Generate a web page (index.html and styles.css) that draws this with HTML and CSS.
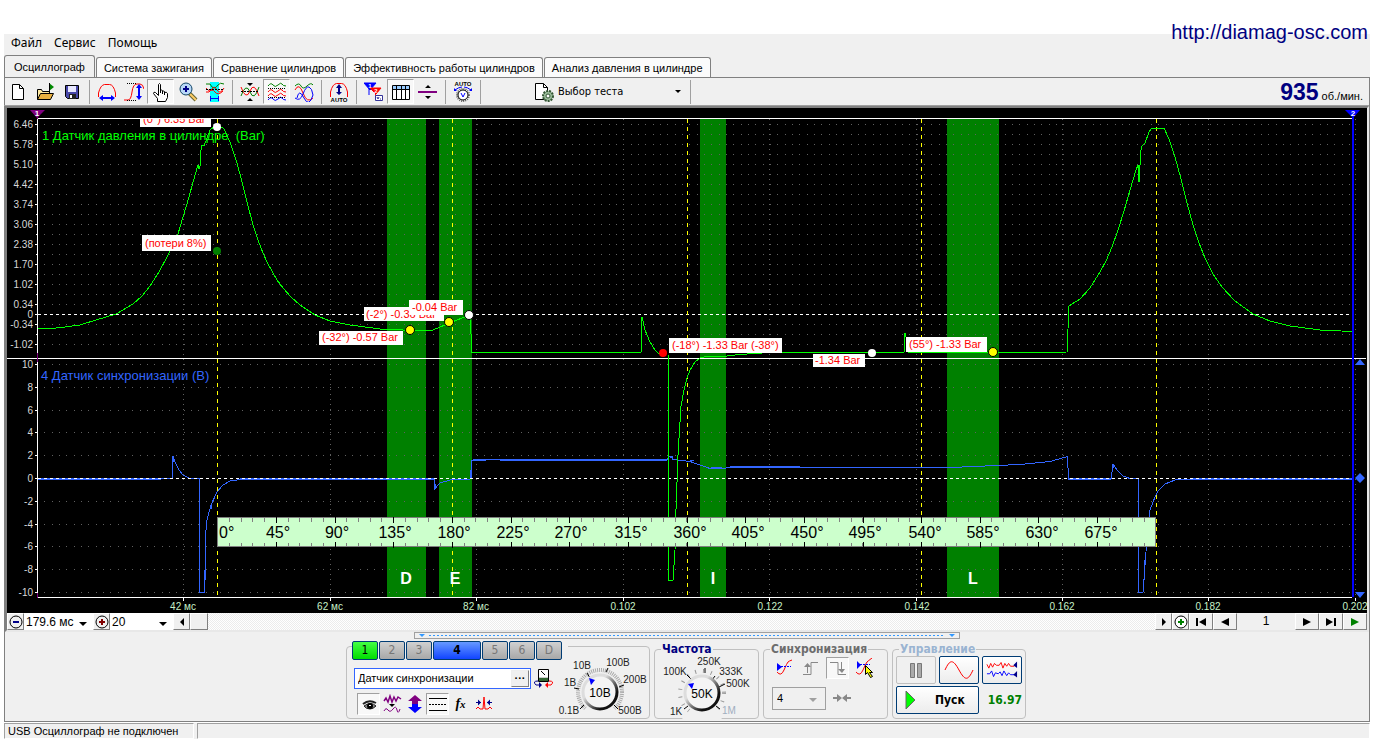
FILE: index.html
```html
<!DOCTYPE html>
<html lang="ru">
<head>
<meta charset="utf-8">
<title>Осциллограф</title>
<link rel="stylesheet" href="styles.css">
</head>
<body>
<header class="site"><a class="site-link" href="#">http://diamag-osc.com</a></header>
<div class="window">
  <nav class="menu">
    <button class="menu-item">Файл</button>
    <button class="menu-item">Сервис</button>
    <button class="menu-item">Помощь</button>
  </nav>
  <div class="tabs" role="tablist">
    <button class="tab active" role="tab" aria-selected="true">Осциллограф</button>
    <button class="tab" role="tab">Система зажигания</button>
    <button class="tab" role="tab">Сравнение цилиндров</button>
    <button class="tab" role="tab">Эффективность работы цилиндров</button>
    <button class="tab" role="tab">Анализ давления в цилиндре</button>
  </div>
  <main class="workspace">
    <div class="toolbar">
      <button class="tool" aria-label="Новый"><svg viewBox="0 0 20 20"><path d="M4.500 2.500h7l4 4v11h-11z" fill="#fff" stroke="#000"/><path d="M11.500 2.500v4h4" fill="none" stroke="#000"/></svg></button>
      <button class="tool" aria-label="Открыть"><svg viewBox="0 0 20 20"><path d="M2.500 17.500v-10h4l1 2h7v3" fill="#ffe9a0" stroke="#000"/><path d="M2.500 17.500l3-6h13l-3 6z" fill="#e8b040" stroke="#000"/><path d="M14 1v8l5-4z" fill="#080"/><path d="M14.500 1v10" stroke="#000"/></svg></button>
      <button class="tool" aria-label="Сохранить"><svg viewBox="0 0 20 20"><path d="M3.500 3.500h13v13h-11l-2-2z" fill="#4848a8" stroke="#000"/><path d="M6 4h8v6H6z" fill="#e8e8ff"/><path d="M7 12h7v5H7z" fill="#222"/><path d="M8 13h2v3H8z" fill="#fff"/></svg></button>
      <span class="sep"></span>
      <button class="tool" aria-label="Развертка"><svg viewBox="0 0 20 20"><path d="M1.500 15v-4q2-8 6-8.500h5q4 0 6 8.500v4" fill="none" stroke="red"/><path d="M5 16h10" stroke="#00f" stroke-width="2"/><path d="M2 16l4-3v6zM18 16l-4-3v6z" fill="#00f"/></svg></button>
      <button class="tool" aria-label="Амплитуда"><svg viewBox="0 0 20 20"><path d="M0 18h4q3 0 4-8t5-8h3q3 0 4 5" fill="none" stroke="red"/><path d="M3 1.500h10M3 18.500h10" stroke="#000" stroke-dasharray="1 1"/><path d="M15 5v10" stroke="#00f" stroke-width="2"/><path d="M15 2l3 4h-6zM15 18l3-4h-6z" fill="#00f"/></svg></button>
      <button class="tool pressed" aria-label="Рука"><svg viewBox="0 0 20 20"><path d="M6.500 19.500v-3l-4-5q0-2 2-1l3 3V2.500q1-2 2 0v6q1.500-1 2 0v1q1.500-1 2 0v1q2-1 3 1v4l-2 4z" fill="#fff" stroke="#000"/><path d="M9.500 8v3M11.500 9v3M13.500 10v3" stroke="#000"/></svg></button>
      <button class="tool" aria-label="Лупа"><svg viewBox="0 0 20 20"><path d="M11 11l7 7" stroke="#663" stroke-width="4"/><path d="M12 12l6 6" stroke="#fc6" stroke-width="2"/><circle cx="8" cy="7" r="6" fill="#b8d8f8" stroke="#146"/><path d="M8 4v6M5 7h6" stroke="#008" stroke-width="2"/></svg></button>
      <button class="tool" aria-label="Фрагмент"><svg viewBox="0 0 20 20"><path d="M5 0h9v20H5z" fill="cyan"/><path d="M1 2h4q2 4 4 4t4-3 6-1" fill="none" stroke="green"/><path d="M1 6q4 5 6 1t5 1 7-2M1 10h3q3-4 6 0t8-1" fill="none" stroke="red"/><path d="M1 7.500h18" stroke="#000" stroke-dasharray="2 1"/><path d="M5.500 14v5M13.500 14v5M6 16.500h7" stroke="#00f"/></svg></button>
      <span class="sep"></span>
      <button class="tool" aria-label="Совместить"><svg viewBox="0 0 20 20"><path d="M1 14q5-14 9-4t9-5" fill="none" stroke="green"/><path d="M1 5q5 14 9 4t9 5" fill="none" stroke="red"/><path d="M1 9.500h18" stroke="#000" stroke-dasharray="2 1"/><path d="M7 1h6l-3 3zM7 19h6l-3-3z"/></svg></button>
      <button class="tool pressed" aria-label="Раздельно"><svg viewBox="0 0 20 20" fill="none"><path d="M1 4q3-4 5-1t5 0 4-1 4 2" stroke="green"/><path d="M1 10q3-4 5-1t5 0 4-1 4 2M1 14q3-4 5-1t5 0 4-1 4 2" stroke="red"/><path d="M1 18q3-4 5-1t5 0 4-1 4 2" stroke="#00f"/><path d="M1 6.500h18M1 15.500h18" stroke="#000" stroke-dasharray="1 1"/></svg></button>
      <button class="tool" aria-label="Наложить"><svg viewBox="0 0 20 20" fill="none"><path d="M1 4q4-4 6 0t6 0 6-1" stroke="green"/><path d="M1 8q4-8 8 3t10 5" stroke="red"/><path d="M1 16q5 4 8-4t6-7q3 1 4 8" stroke="#00f"/><path d="M3 16q2-10 7 0t9-3" stroke="#00f"/></svg></button>
      <span class="sep"></span>
      <button class="tool" aria-label="Авто"><svg viewBox="0 0 20 20"><path d="M1.500 15v-5q2-8 6-8.500h5q4 0 6 8.500v5" fill="none" stroke="red"/><path d="M10 5v6" stroke="#008" stroke-width="2"/><path d="M10 2l3 4H7zM10 13l3-3H7z" fill="#008"/><text x="10" y="20" class="micro">AUTO</text></svg></button>
      <span class="sep"></span>
      <button class="tool" aria-label="Маркеры"><svg viewBox="0 0 20 20"><path d="M0 1h12L6 8zM5 5v8" fill="#00f" stroke="#00f"/><path d="M6 6h11l-5 6zM11.500 10v5" fill="red" stroke="red"/><text x="6" y="6" class="micro light">1</text><text x="12" y="11" class="micro light">2</text><path d="M11.500 13.500h7v5h-7z" fill="#fff" stroke="#339"/><path d="M13 15l1 2 1-2M16 17h1" fill="none" stroke="#339"/></svg></button>
      <button class="tool pressed" aria-label="Таблица"><svg viewBox="0 0 20 20"><path d="M1.500 3.500h17v14h-17z" fill="#fff" stroke="#000"/><path d="M2 4h16v3H2z" fill="#9cf"/><path d="M1 7.500h18M5.500 4v14M10.500 4v14M14.500 4v14" stroke="#000"/></svg></button>
      <button class="tool" aria-label="Разделитель"><svg viewBox="0 0 20 20"><path d="M0 10h19" stroke="purple" stroke-width="2"/><path d="M7 6h6l-3-3zM7 14h6l-3 3z"/></svg></button>
      <span class="sep"></span>
      <button class="tool" aria-label="Автомасштаб"><svg viewBox="0 0 20 20"><text x="10" y="4" class="micro">AUTO</text><circle cx="10" cy="13" r="6" fill="#fff" stroke="#666" stroke-width="2" stroke-dasharray="1 1"/><circle cx="10" cy="13" r="5" fill="#fff" stroke="#000"/><path d="M8 11l2 4 2-4" fill="none" stroke="#00f"/><path d="M2 8q4-3 7-3M18 8q-4-3-7-3" fill="none" stroke="#00f"/><path d="M1 6v3h3zM19 6v3h-3z" fill="#00f"/></svg></button>
      <span class="sep"></span>
      <button class="test-pick"><svg viewBox="0 0 22 20"><path d="M2.500 1.500h8l4 4v12h-12z" fill="#fff" stroke="#000"/><path d="M10.500 1.500v4h4" fill="none" stroke="#000"/><circle cx="15" cy="14" r="5" fill="#9b9" stroke="#353" stroke-width="2" stroke-dasharray="2 1"/><circle cx="15" cy="14" r="2" fill="#fff" stroke="#353"/></svg><span>Выбор теста</span><i class="down"></i></button>
      <span class="sep"></span>
      <output class="rpm"><b>935</b> об./мин.</output>
    </div>
    <section class="scope">
      <svg class="chart" viewBox="7 108 1360 505" role="img" aria-label="Осциллограмма">
        <path d="M7 108h1360v505H7z" fill="#000"/>
        <g fill="green"><path d="M387 119h39v478h-39zM439 119h33v478h-33zM700 119h26v478h-26zM947 119h52v478h-52z"/></g>
        <g class="dots">
          <path stroke-dasharray="1 6.330" d="M37 124.500H1352M37 134.500H1352M37 144.500H1352M37 154.500H1352M37 164.500H1352M37 174.500H1352M37 184.500H1352M37 194.500H1352M37 204.500H1352M37 214.500H1352M37 224.500H1352M37 234.500H1352M37 244.500H1352M37 254.500H1352M37 264.500H1352M37 274.500H1352M37 284.500H1352M37 294.500H1352M37 304.500H1352M37 324.500H1352M37 334.500H1352M37 344.500H1352M37 364.500H1352M37 387.500H1352M37 410.500H1352M37 432.500H1352M37 455.500H1352M37 501.500H1352M37 524.500H1352M37 546.500H1352M37 569.500H1352M37 592.500H1352"/>
          <path stroke-dasharray="1 4" d="M183.500 119V597M330.500 119V597M476.500 119V597M623.500 119V597M769.500 119V597M916.500 119V597M1062.500 119V597M1208.500 119V597M1355.500 119V597"/>
        </g>
        <g class="axis">
          <path d="M37 118.500H1352M7 358.500H1366M37 597.500H1352M37.500 119V353M37.500 362V597"/>
          <path d="M35 124.500h3M36 134.500h2M35 144.500h3M36 154.500h2M35 164.500h3M36 174.500h2M35 184.500h3M36 194.500h2M35 204.500h3M36 214.500h2M35 224.500h3M36 234.500h2M35 244.500h3M36 254.500h2M35 264.500h3M36 274.500h2M35 284.500h3M36 294.500h2M35 304.500h3M35 314.500h3M35 324.500h3M36 334.500h2M35 344.500h3M35 364.500h3M35 387.500h3M35 410.500h3M35 432.500h3M35 455.500h3M35 478.500h3M35 501.500h3M35 524.500h3M35 546.500h3M35 569.500h3M35 592.500h3"/>
          <path d="M183.500 598v3M330.500 598v3M476.500 598v3M623.500 598v3M769.500 598v3M916.500 598v3M1062.500 598v3M1208.500 598v3M1355.500 598v3"/>
        </g>
        <path class="zero" d="M38 314.500H1350"/>
        <g class="cursor"><path d="M217.500 119V597M452.500 119V597M687.500 119V597M921.500 119V597M1156.500 119V597"/></g>
        <g class="scale">
          <text x="33" y="128">6.46</text><text x="33" y="148">5.78</text><text x="33" y="168">5.10</text><text x="33" y="188">4.42</text><text x="33" y="208">3.74</text><text x="33" y="228">3.06</text><text x="33" y="248">2.38</text><text x="33" y="268">1.70</text><text x="33" y="288">1.02</text><text x="33" y="308">0.34</text><text x="33" y="318">0</text><text x="33" y="328">-0.34</text><text x="33" y="348">-1.02</text>
          <text x="33" y="368">10</text><text x="33" y="391">8</text><text x="33" y="414">6</text><text x="33" y="436">4</text><text x="33" y="459">2</text><text x="33" y="482">0</text><text x="33" y="505">-2</text><text x="33" y="528">-4</text><text x="33" y="550">-6</text><text x="33" y="573">-8</text><text x="33" y="596">-10</text>
        </g>
        <g class="time">
          <text x="183" y="610">42 мс</text><text x="330" y="610">62 мс</text><text x="476" y="610">82 мс</text><text x="623" y="610">0.102</text><text x="770" y="610">0.122</text><text x="917" y="610">0.142</text><text x="1062" y="610">0.162</text><text x="1208" y="610">0.182</text><text x="1355" y="610">0.202</text>
        </g>
        <text class="name" x="42" y="140" fill="lime">1 Датчик давления в цилиндре&#160; (Bar)</text>
        <text class="name" x="41" y="380" fill="#36f">4 Датчик синхронизации (В)</text>
        <path class="trace" stroke="#36f" d="M38 479.500H150L172 478.500 173 456.500 175 462 179 470 183 475 190 478.500H199.500V592.500H204.500L205 570 206 530 207 520 211 505 217 492 223 485 230 481 240 479.500H434.500V489L440 483 450 480 470 479.500 472 460.500 500 459.500H667L669 456.500H672L673 459.500 690 461.500 700 465 710 468.500H722L730 467.500H950L1020 464.500 1050 461.500 1067.500 456.500 1068.500 479.500H1111L1113 464 1117 470 1123 476 1130 478.500H1138.500V592.500H1143L1145 565 1148 525 1150 510 1155 497 1158 491 1165 484 1175 480 1190 479.500H1352"/>
        <path class="trace" stroke="#36f" d="M39 478.500H172M240 478.500H434M1069 478.500H1111M1190 478.500H1352M173.500 457V462M205.500 530V580M211.500 504V509M435.500 484V488M471.500 460V478M473 459.500H500M500 460.500H667M670 457.500H673M690 460.500H694M711 467.500H722M730 466.500H800M1113.500 464V468M1144.500 560V580"/>
        <path class="zero" d="M38 478.500H1350"/>
        <path class="trace" stroke="lime" d="M38 328.500H52L65 327 80 325 96 320 116 314 133 304 142 296 150 286 159 272 167 257 173 245 178 234 183 217 187 204 192 186 195 175 198 165 199 169 200 166 201 150 202 145 204 146 207 138 210 130 214 127H222L224 129 230 142 237 163 242 182 247 202 253 225 258 240 263 253 267 262 272 271 277 280 283 288 291 297 300 305 315 315 330 321 350 325 380 329 403 330 420 331 433 330 445 325 457 320 470 315 472 352.500H641L642 317 645 330 650 342 655 350 658 353H661M668.500 355V580.500H673L675 550 676 510 678 455 681 406 684 390 687 378 690 370 695 362 700 358 708 356 720 357 735 355 747 354 770 352.500H904L905 333 907 341 909 352.500H1035L1067 352 1069 306 1072 304 1080 299 1090 288 1100 272 1106 261 1112 247 1118 230 1124 211 1130 190 1136 170 1138 165 1139 182 1140 165 1141 150 1142 146 1145 143 1149 132 1152 128H1164L1169 139 1175 157 1181 179 1187 203 1193 225 1199 243 1205 258 1213 274 1222 287 1235 301 1253 314 1270 321 1290 326 1320 330 1352 331.500"/>
        <g fill="#fff"><path d="M142 235h69v16h-69zM140 119h71v8h-71zM319 331h84v14h-84zM364 307h80v14h-80z"/></g>
        <clipPath id="plot"><path d="M38 119h1314v478H38z"/></clipPath>
        <g class="note">
          <text x="143" y="123" clip-path="url(#plot)">(0°) 6.35 Bar</text>
          <text x="145" y="247">(потери 8%)</text>
          <text x="322" y="341">(-32°) -0.57 Bar</text>
          <text x="366" y="318">(-2°) -0.36 Bar</text>
          <path d="M409 300h54v15h-54z" fill="#fff"/><text x="412" y="311">-0.04 Bar</text>
          <path d="M669 338h113v15H669z" fill="#fff"/><text x="672" y="349">(-18°) -1.33 Bar (-38°)</text>
          <path d="M813 354h52v13h-52z" fill="#fff"/><text x="815" y="364">-1.34 Bar</text>
          <path d="M906 337h81v15h-81z" fill="#fff"/><text x="909" y="348">(55°) -1.33 Bar</text>
        </g>
        <circle cx="217" cy="127" r="4" fill="#fff"/><circle cx="217" cy="251" r="4" fill="green"/>
        <g stroke="#000"><circle cx="410" cy="330" r="4.500" fill="#ff0"/><circle cx="449" cy="322" r="4.500" fill="#ff0"/><circle cx="469" cy="315" r="4.500" fill="#fff"/><circle cx="993" cy="352" r="4.500" fill="#ff0"/></g>
        <circle cx="663" cy="353" r="4" fill="red"/><circle cx="872" cy="353" r="4" fill="#fff"/>
        <g class="ruler">
          <path d="M217.500 517.500h938v29h-938z" fill="#cfc" stroke="#808080"/>
          <path d="M229 520H1155M229 545H1155" stroke="#808080" stroke-width="4" stroke-dasharray="1 10.730"/>
          <path d="M276 520H1155M276 545H1155" stroke="#000" stroke-width="6" stroke-dasharray="1 57.650"/>
          <text x="219" y="538" class="zero-mark">0°</text><text x="278" y="538">45°</text><text x="337" y="538">90°</text><text x="395" y="538">135°</text><text x="454" y="538">180°</text><text x="513" y="538">225°</text><text x="571" y="538">270°</text><text x="631" y="538">315°</text><text x="690" y="538">360°</text><text x="748" y="538">405°</text><text x="807" y="538">450°</text><text x="865" y="538">495°</text><text x="925" y="538">540°</text><text x="983" y="538">585°</text><text x="1042" y="538">630°</text><text x="1101" y="538">675°</text>
        </g>
        <g class="zone"><text x="406" y="584">D</text><text x="455" y="584">E</text><text x="713" y="584">I</text><text x="973" y="584">L</text></g>
        <path d="M30 110h15l-8 8z" fill="purple"/><path d="M37.500 117v2M37.500 353v9M37.500 593v5" stroke="purple"/>
        <path d="M1345 110h15l-7 8z" fill="#00f"/><path d="M1353 115V597" stroke="#00f" stroke-width="2"/>
        <text class="tag" x="37" y="116">1</text><text class="tag" x="1353" y="116">2</text>
        <g fill="#36f"><path d="M1355 365h10l-5-6zM1355 592h10l-5 6zM1360 473l5 5-5 5-5-5z"/></g>
      </svg>
      <div class="navbar">
        <button class="nav small" aria-label="Уменьшить"><svg viewBox="0 0 14 14"><circle cx="7" cy="7" r="6" fill="#f0f0f0" stroke="#000"/><path d="M4 7h6" stroke="#008" stroke-width="2"/></svg></button>
        <span class="pick span"><select aria-label="Развертка"><option>179.6 мс</option></select></span>
        <button class="nav small" aria-label="Увеличить"><svg viewBox="0 0 14 14"><circle cx="7" cy="7" r="6" fill="#f0f0f0" stroke="#000"/><path d="M4 7h6M7 4v6" stroke="#800000" stroke-width="2"/></svg></button>
        <span class="pick step"><select aria-label="Шаг"><option>20</option></select></span>
        <button class="nav small" aria-label="Влево"><svg viewBox="0 0 14 14"><path d="M9 3v8L5 7z"/></svg></button>
        <span class="track"><span class="thumb"></span></span>
        <button class="nav small" aria-label="Вправо"><svg viewBox="0 0 14 14"><path d="M5 3v8l4-4z"/></svg></button>
        <button class="nav small" aria-label="Добавить"><svg viewBox="0 0 14 14"><circle cx="7" cy="7" r="6" fill="#fff" stroke="#000"/><path d="M4 7h6M7 4v6" stroke="green" stroke-width="2"/></svg></button>
        <button class="nav" aria-label="В начало"><svg viewBox="0 0 14 14"><path d="M3 3v8" stroke="#000" stroke-width="2"/><path d="M12 3v8L5 7z"/></svg></button>
        <button class="nav" aria-label="Назад"><svg viewBox="0 0 14 14"><path d="M11 3v8L3 7z"/></svg></button>
        <output class="page">1</output>
        <button class="nav" aria-label="Вперед"><svg viewBox="0 0 14 14"><path d="M3 3v8l8-4z"/></svg></button>
        <button class="nav" aria-label="В конец"><svg viewBox="0 0 14 14"><path d="M2 3v8l7-4z"/><path d="M11 3v8" stroke="#000" stroke-width="2"/></svg></button>
        <button class="nav" aria-label="Играть"><svg viewBox="0 0 14 14"><path d="M3 3v8l8-4z" fill="green"/></svg></button>
      </div>
    </section>
    <button class="splitter" aria-label="Свернуть панель"><i></i><span></span><i></i></button>
    <section class="controls">
      <div class="group channel">
        <div class="channels">
          <button class="ch one">1</button><button class="ch">2</button><button class="ch">3</button><button class="ch four">4</button><button class="ch">5</button><button class="ch">6</button><button class="ch">D</button>
        </div>
        <div class="channel-body">
          <div class="sensor-row">
            <span class="sensor"><input aria-label="Датчик" value="Датчик синхронизации"><button aria-label="Выбрать">···</button></span>
            <button class="mini" aria-label="Щуп"><svg viewBox="0 0 20 20"><path d="M4.500 1.500h10v12h-10z" fill="#ccc" stroke="#000"/><path d="M5 2h9v7H5z" fill="#fff"/><path d="M7 3l4 4" stroke="#000"/><path d="M5 11.500h9" stroke="#363" stroke-width="3"/><path d="M4 13q-6 0-2 4h3" fill="none" stroke="#008"/><path d="M15 13q6 0 2 4h-4" fill="none" stroke="red"/><path d="M8 17l-3-3v6z" fill="#008"/><path d="M11 17l3-3v6z" fill="red"/></svg></button>
          </div>
          <div class="mini-row">
            <button class="mini pressed" aria-label="Видимость"><svg viewBox="0 0 20 20"><path d="M5 12q7-5 12 0-3 3-6 3-4 0-6-3z" fill="#888" stroke="#222"/><circle cx="11" cy="12" r="3"/><path d="M4 10q6-5 13-1" fill="none" stroke="#222" stroke-width="2"/><path d="M10 11h2v1h-2z" fill="#fff"/></svg></button>
            <button class="mini" aria-label="Фильтр"><svg viewBox="0 0 20 20" fill="none"><path d="M2 7l2-3 2 4 2-6 2 6 2-5 2 4 2-4 3 2" stroke="purple" stroke-width="1.500"/><path d="M7 10h6l-3 3z" fill="#000"/><path d="M2 17q2-4 4-1t5-1 4 1 3-1" stroke="purple"/></svg></button>
            <button class="mini" aria-label="Смещение"><svg viewBox="0 0 20 20"><path d="M10 1l7 6h-4v3H7V7H3z" fill="purple"/><path d="M10 19l7-6h-4v-3H7v3H3z" fill="#00f"/></svg></button>
            <button class="mini pressed" aria-label="Уровни"><svg viewBox="0 0 20 20"><path d="M1 4.500h18M1 16.500h18" stroke="#000"/><path d="M1 10.500h18" stroke="#000" stroke-dasharray="2 1"/></svg></button>
            <button class="mini fx">f<sub>x</sub></button>
            <button class="mini" aria-label="Пик"><svg viewBox="0 0 20 20" fill="none"><path d="M2 15l2-2 2 2h3l1-12 1 12h3l2-2 2 2" stroke="red"/><path d="M2 8.500h5M13 8.500h5" stroke="#008"/><path d="M7 8.500l-3-3v6zM13 8.500l3-3v6z" fill="#008"/></svg></button>
          </div>
        </div>
        <svg class="dial" viewBox="555 654 94 62" role="img" aria-label="Масштаб 10В">
          <defs><linearGradient id="rim" x1="0" y1="0" x2="1" y2="1"><stop offset="0.350" stop-color="#ddd"/><stop offset="0.750" stop-color="#111"/></linearGradient></defs>
          <circle cx="600" cy="692" r="22" fill="none" stroke="#aaa" stroke-width="4" stroke-dasharray="1 1"/>
          <path d="M590 704l-14 14h48l-14-14z" fill="#f0f0f0"/>
          <path d="M587 673l3 5M608 668l-2 4M619 687l5-2M614 705l4 4M574 688l5 1M584 705l-4 4" stroke="#000"/>
          <circle cx="600" cy="692" r="17" fill="#f4f4f4" stroke="url(#rim)" stroke-width="3"/>
          <path d="M589 678l6 2-4 5z" fill="#00f"/>
          <g class="dial-text"><text x="600" y="697" class="value">10В</text><text x="582" y="669">10В</text><text x="618" y="666">100В</text><text x="635" y="683">200В</text><text x="570" y="686">1В</text><text x="569" y="714">0.1В</text><text x="630" y="714">500В</text></g>
        </svg>
      </div>
      <fieldset class="group rate"><legend>Частота</legend>
        <svg class="dial" viewBox="655 654 96 62" role="img" aria-label="Частота 50K">
          <circle cx="702" cy="692" r="22" fill="none" stroke="#999" stroke-width="4" stroke-dasharray="1 7"/>
          <path d="M692 706l-10 12h40l-10-12z" fill="#f0f0f0"/>
          <path d="M687 674l4 4M705 667v5M715 675l-3 4M719 686l6-3M688 705l-4 3M716 705l4 3" stroke="#000"/>
          <circle cx="702" cy="692" r="17" fill="#f4f4f4" stroke="url(#rim)" stroke-width="3"/>
          <path d="M688 683l6-1-2 6z" fill="#00f"/>
          <g class="dial-text"><text x="702" y="697" class="value">50K</text><text x="675" y="674">100K</text><text x="709" y="664">250K</text><text x="731" y="674">333K</text><text x="738" y="686">500K</text><text x="676" y="714">1K</text><text x="729" y="713" class="off">1M</text></g>
        </svg>
      </fieldset>
      <fieldset class="group sync"><legend>Синхронизация</legend>
        <div class="sync-row">
          <button class="mini" aria-label="Уровень"><svg viewBox="0 0 20 20"><path d="M3 14q4 5 7-2t4-8 4-2" fill="none" stroke="red"/><path d="M3 5v8l5-4z" fill="#00f"/><path d="M7 8.500h10" stroke="#00f" stroke-dasharray="2 1"/></svg></button>
          <button class="mini" aria-label="Фронт"><svg viewBox="0 0 20 20" fill="none"><path d="M2 16.500h8v-12h7" stroke="#888"/><path d="M6.500 15v-7" stroke="#888"/><path d="M3 9h7L6.500 5z" fill="#888"/></svg></button>
          <button class="mini pressed" aria-label="Спад"><svg viewBox="0 0 20 20" fill="none"><path d="M2 4.500h8v12h8" stroke="#888"/><path d="M13.500 4v9" stroke="#888"/><path d="M10 11h7l-3 4z" fill="#888"/></svg></button>
          <button class="mini" aria-label="Установить"><svg viewBox="0 0 20 20"><path d="M1 14q4 5 7-2t4-8 5-4" fill="none" stroke="red"/><path d="M2 3v8l4-4z" fill="#00f"/><path d="M5 6.500h10" stroke="#00f" stroke-dasharray="2 1"/><path d="M10.500 7.500v9l2-2 3 5 2-1-3-4h3z" fill="#ff0" stroke="#000"/></svg></button>
        </div>
        <div class="sync-row">
          <span class="pick source"><select disabled aria-label="Источник"><option>4</option></select></span>
          <button class="mini" aria-label="Центрировать"><svg viewBox="0 0 20 20"><path d="M1 10h6M13 10h6" stroke="#888" stroke-width="2"/><path d="M5 6v8l5-4zM15 6v8l-5-4z" fill="#888"/></svg></button>
        </div>
      </fieldset>
      <fieldset class="group run"><legend>Управление</legend>
        <button class="big off" aria-label="Пауза"><svg viewBox="0 0 30 22"><path d="M9.500 4.500h4v14h-4zM16.500 4.500h4v14h-4z" fill="#aaa" stroke="#777"/></svg></button>
        <button class="big" aria-label="Синус"><svg viewBox="0 0 30 22" fill="none"><path d="M1 11C6 0 9 0 15 11s9 11 14 0" stroke="red"/></svg></button>
        <button class="big" aria-label="Запись"><svg viewBox="-1 0 34 22" fill="none"><path d="M0 5l2 4 2-5 2 4 2-4 2 2h3l2-3 2 6 2-5 2 3 2-3 2 3h4" stroke="red"/><path d="M0 15h3l2-3 2 6 2-4 3 1 2-2 2 4 2-5 3 5 2-3 2 2h5" stroke="#00f"/><path d="M32 2v7l-4-3zM32 12v7l-4-3z" fill="#008"/></svg></button>
        <button class="big start"><svg viewBox="0 0 12 20"><path d="M1 1v18l9-9z" fill="#0f0" stroke="#666"/></svg>Пуск</button>
        <output class="volts">16.97</output>
      </fieldset>
    </section>
  </main>
  <footer class="status"><span class="state">USB Осциллограф не подключен</span><span class="rest"></span></footer>
</div>
</body>
</html>
```
FILE: styles.css
```css
* { box-sizing: border-box; }
body { margin: 0; padding: 0 12px 4px 4px; background: #fff; color: #000; font: 11px/14px "Liberation Sans", Arial, sans-serif; }
button, select, input { font: inherit; color: inherit; margin: 0; padding: 0; border-radius: 0; }
button { border: 0; background: none; }
svg { display: block; }
.site { height: 34px; padding-top: 20px; text-align: right; }
.site-link { position: relative; z-index: 1; padding-right: 2px; color: #000080; font: 20px/24px "Liberation Sans", Arial, sans-serif; text-decoration: none; }
.window { background: #f0f0f0; }
.menu { display: flex; align-items: flex-start; gap: 12px; height: 21px; padding: 0 7px; font: 12px/18px "Noto Sans", sans-serif; }
.tabs { display: flex; align-items: flex-end; gap: 1px; height: 22px; }
.tab { height: 20px; padding: 0 7px; border: 1px solid #808080; border-bottom: 0; border-radius: 3px 3px 0 0; background: #fbfbfb; white-space: nowrap; }
.tab.active { height: 22px; padding: 0 9px; background: #f0f0f0; }
.workspace { border: 1px solid #808080; border-top: 0; }
.toolbar { display: flex; align-items: center; height: 29px; border-top: 1px solid #808080; border-bottom: 1px solid #a0a0a0; margin-left: -1px; }
.tool { flex: none; display: flex; align-items: center; justify-content: center; width: 27px; height: 25px; }
.tool svg { width: 20px; height: 20px; }
.pressed { background: #f8f8f8; border: 1px solid; border-color: #a0a0a0 #fff #fff #a0a0a0; }
.sep { flex: none; width: 8px; height: 24px; background: linear-gradient(#a0a0a0, #a0a0a0) center / 1px 100% no-repeat; }
.micro { font: bold 6px "Liberation Sans", sans-serif; text-anchor: middle; }
.light { fill: #fff; }
.test-pick { display: flex; align-items: center; width: 202px; height: 24px; padding: 0 5px 0 49px; gap: 3px; text-align: left; font-family: "DejaVu Sans Condensed", sans-serif; }
.test-pick svg { width: 22px; height: 20px; }
.test-pick span { flex: 1; }
.down { border: 3px solid transparent; border-top-color: #000; border-bottom: 0; }
.rpm { margin-left: auto; padding-right: 6px; }
.rpm b { color: #000080; font: bold 23px/24px "Liberation Sans", Arial, sans-serif; }
.scope { border: 2px solid; border-color: #808080 #e8e8e8 #e8e8e8 #808080; }
.chart { width: 100%; height: auto; font-family: "Liberation Sans", Arial, sans-serif; }
.dots { stroke: #606060; shape-rendering: crispEdges; }
.axis { stroke: #fff; shape-rendering: crispEdges; }
.zero { stroke: #fff; stroke-dasharray: 3 3; shape-rendering: crispEdges; }
.cursor { stroke: #ff0; stroke-dasharray: 4 4; shape-rendering: crispEdges; }
.scale { fill: #d8d8d8; font-size: 10px; text-anchor: end; }
.time { fill: #c8f0c8; font-size: 10px; text-anchor: middle; }
.name { font-size: 13px; }
.trace { fill: none; shape-rendering: crispEdges; }
.note { fill: red; font-size: 11px; }
.ruler { font-size: 16px; text-anchor: middle; shape-rendering: crispEdges; }
.zero-mark { text-anchor: start; }
.zone { fill: #fff; font: bold 16px "Liberation Sans", Arial, sans-serif; text-anchor: middle; }
.tag { fill: #fff; font: bold 8px "Liberation Sans", sans-serif; text-anchor: middle; }
.navbar { display: flex; height: 17px; background: #fff; font-size: 12px; }
.nav { flex: none; display: flex; align-items: center; justify-content: center; width: 24px; border: 1px solid; border-color: #fff #808080 #808080 #fff; background: #f0f0f0; }
.nav.small { width: 17px; }
.nav svg { width: 14px; height: 14px; }
.pick { position: relative; flex: none; display: block; }
.pick::after { content: ""; position: absolute; right: 6px; top: 50%; border: 4px solid transparent; border-top-color: #000; border-bottom: 0; pointer-events: none; }
.pick select { appearance: none; display: block; width: 100%; height: 100%; padding: 0 2px; border: 0; background: #fff; }
.span { width: 69px; }
.step { width: 63px; }
.track { flex: 1; display: flex; background: repeating-conic-gradient(#ececec 0 25%, #fff 0 50%) 0 0 / 2px 2px; }
.thumb { width: 18px; border: 1px solid; border-color: #fff #808080 #808080 #fff; background: #f0f0f0; }
.page { flex: none; width: 58px; background: #f0f0f0; text-align: center; line-height: 17px; }
.splitter { display: flex; align-items: center; gap: 4px; width: 40%; height: 7px; margin: 0 auto; padding: 0 4px; border: 1px solid #a0a0a0; }
.splitter span { flex: 1; height: 1px; background: repeating-linear-gradient(90deg, #39f 0 2px, transparent 2px 4px); }
.splitter i { border: 3px solid transparent; border-top-color: #39f; border-bottom: 0; }
.controls { display: flex; justify-content: center; gap: 4px; height: 82px; padding: 3px 2px 2px 0; }
.group { flex: none; min-width: 0; margin: 0; padding: 0; border: 1px solid #c0c0c0; border-radius: 4px; }
.channel { position: relative; display: grid; grid-template-columns: 208px 94px; width: 304px; height: 73px; margin-top: 4px; }
.channels { position: absolute; left: 5px; top: -6px; display: flex; gap: 1px; background: #f0f0f0; padding-right: 6px; }
.ch { width: 26px; height: 19px; border: 1px solid #003c74; border-radius: 2px; background: linear-gradient(#d0d0d0, #a8a8a8); color: #777; font: 12px/17px "DejaVu Sans Condensed", sans-serif; }
.ch.one { background: linear-gradient(#4f4, #0d0); color: #000; }
.ch.four { width: 48px; background: linear-gradient(#69f, #14f); color: #000; font-weight: bold; }
.channel-body { display: flex; flex-direction: column; gap: 4px; padding: 20px 0 0 7px; }
.sensor-row { display: flex; align-items: center; gap: 1px; }
.sensor { display: flex; width: 178px; height: 21px; padding: 1px; border: 1px solid #36f; background: #fff; }
.sensor input { flex: 1; min-width: 0; padding: 0 2px; border: 0; background: none; }
.sensor button { width: 18px; border: 1px solid; border-color: #eee #808080 #808080 #eee; background: #f0f0f0; font-weight: bold; line-height: 12px; }
.mini { flex: none; display: flex; align-items: center; justify-content: center; width: 23px; height: 22px; }
.mini svg { width: 20px; height: 20px; }
.mini-row { display: flex; padding-left: 3px; }
.fx { font: italic bold 14px/20px "Liberation Serif", serif; }
.fx sub { font-size: 11px; line-height: 10px; vertical-align: -2px; }
.dial { width: 94px; height: 62px; margin-top: 7px; overflow: visible; font-family: "Liberation Sans", Arial, sans-serif; }
.dial-text { font-size: 10px; text-anchor: middle; fill: #222; }
.dial-text .value { font-size: 12px; fill: #000; }
.dial-text .off { fill: #a0aec0; }
fieldset.group { height: 77px; }
legend { height: 14px; padding: 0 1px; margin-left: 6px; font: bold 12px/14px "DejaVu Sans Condensed", sans-serif; }
.rate { width: 105px; }
.rate legend { color: #000080; }
.rate .dial { width: 96px; margin-top: -1px; }
.sync { width: 125px; }
.sync legend { color: #6d6d6d; }
.sync-row { display: flex; align-items: center; gap: 4px; padding: 0 8px; height: 24px; }
.sync-row + .sync-row { padding-top: 6px; height: 30px; }
.source { width: 54px; height: 23px; border: 1px solid #a0a0a0; }
.source select { padding: 0 4px; background: #f0f0f0; color: #000; opacity: 1; }
.source::after { border-top-color: #a0a0a0; right: 8px; }
.run { display: grid; grid-template-columns: 40px 40px 40px; grid-auto-rows: 28px; gap: 2px 3px; width: 134px; padding: 0 3px; }
.run legend { margin-left: 3px; color: #9ab4d2; }
.big { display: flex; align-items: center; justify-content: center; border: 1px solid #003c74; border-radius: 2px; background: linear-gradient(#fff, #ececec); }
.big svg { width: 32px; height: 22px; }
.big.off { border-color: #c0c0c0; background: #f0f0f0; }
.start { grid-column: span 2; justify-content: flex-start; gap: 18px; padding-left: 8px; font: bold 12px/16px "DejaVu Sans Condensed", sans-serif; }
.start svg { width: 12px; height: 20px; }
.volts { align-self: center; text-align: right; color: green; font: bold 12px/16px "DejaVu Sans Condensed", sans-serif; }
.status { display: flex; gap: 3px; height: 17px; border-top: 1px solid #fff; }
.status span { border: 1px solid; border-color: #a0a0a0 #fff #fff #a0a0a0; padding: 0 3px; line-height: 15px; white-space: nowrap; }
.state { width: 190px; }
.rest { flex: 1; }
```
